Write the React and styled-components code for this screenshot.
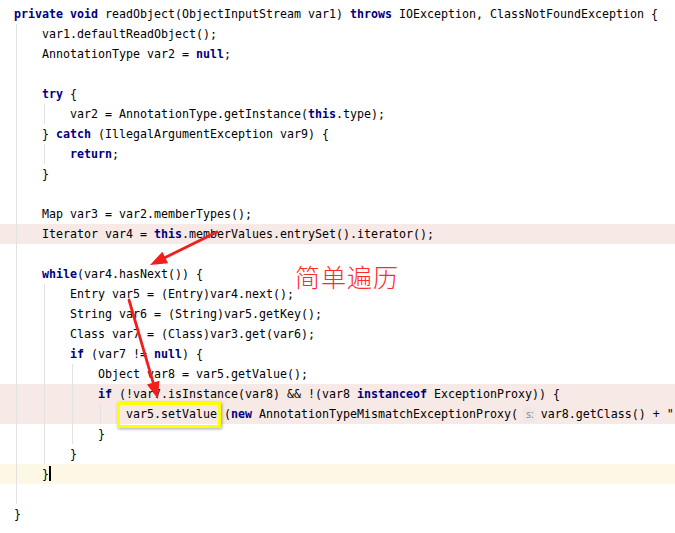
import React from "react";
import styled, { createGlobalStyle } from "styled-components";

const Global = createGlobalStyle`
  html, body { margin: 0; padding: 0; background: #ffffff; }
  #root { width: 675px; height: 533px; }
`;

const Editor = styled.div`
  position: relative;
  width: 675px;
  height: 533px;
  overflow: hidden;
  background: #ffffff;
  padding-top: 4px;
  box-sizing: border-box;
  font-family: "DejaVu Sans Mono", "Liberation Mono", monospace;
  font-size: 11.63px;
  color: #000000;
`;

const Line = styled.div`
  height: 20px;
  line-height: 20px;
  white-space: pre;
  padding-left: ${(p) => 14 + p.$indent * 28}px;
  background: ${(p) =>
    p.$hl === "error" ? "#f7e9e5" : p.$hl === "caret" ? "#fdf8e6" : "transparent"};
`;

const Kw = styled.span`
  color: #000080;
  font-weight: bold;
`;

const Hint = styled.span`
  display: inline-block;
  margin: 0 4px 0 5px;
  padding: 0 3px;
  height: 15px;
  line-height: 15px;
  border-radius: 3px;
  background: #efe8e6;
  color: #8a8a8a;
  font-family: "Noto Sans", "DejaVu Sans", sans-serif;
  font-size: 10.5px;
  vertical-align: 0px;
`;

const Boxed = styled.span`
  position: relative;
  display: inline-block;
  height: 20px;
  &::after {
    content: "";
    position: absolute;
    left: -9px;
    top: -2px;
    right: -4px;
    bottom: -4px;
    border: 3px solid #ffff00;
    box-shadow: 1px 1px 3px rgba(0, 0, 0, 0.35);
  }
`;

const Caret = styled.span`
  display: inline-block;
  width: 2px;
  height: 15px;
  background: #000000;
  vertical-align: -3px;
`;

const Guide = styled.div`
  position: absolute;
  width: 1px;
  background: #e2e2e2;
`;

const Overlay = styled.svg`
  position: absolute;
  left: 0;
  top: 0;
  pointer-events: none;
`;

const Note = styled.div`
  position: absolute;
  left: 295px;
  top: 261px;
  font-family: "Noto Sans CJK SC", sans-serif;
  font-weight: 300;
  font-size: 25px;
  letter-spacing: 1px;
  color: #ff2a2a;
  line-height: 30px;
`;

const guides = [
  { x: 16, top: 24, bottom: 504 },
  { x: 44, top: 104, bottom: 124 },
  { x: 44, top: 144, bottom: 164 },
  { x: 44, top: 284, bottom: 464 },
  { x: 72, top: 364, bottom: 444 },
  { x: 100, top: 404, bottom: 424 },
];

function Arrow({ x1, y1, x2, y2 }) {
  const dx = x2 - x1;
  const dy = y2 - y1;
  const len = Math.sqrt(dx * dx + dy * dy);
  const ux = dx / len;
  const uy = dy / len;
  const hl = 17;
  const hw = 6.5;
  const bx = x2 - ux * hl;
  const by = y2 - uy * hl;
  const px = -uy;
  const py = ux;
  const pts = `${x2},${y2} ${bx + px * hw},${by + py * hw} ${bx - px * hw},${by - py * hw}`;
  return (
    <g>
      <line x1={x1} y1={y1} x2={bx + ux * 3} y2={by + uy * 3} stroke="#f21d1d" strokeWidth="2.8" strokeLinecap="round" />
      <polygon points={pts} fill="#f21d1d" />
    </g>
  );
}

export default function App() {
  return (
    <>
      <Global />
      <Editor>
        {guides.map((g, i) => (
          <Guide key={i} style={{ left: g.x, top: g.top, height: g.bottom - g.top }} />
        ))}
        <Line $indent={0}>
          <Kw>private</Kw> <Kw>void</Kw> readObject(ObjectInputStream var1) <Kw>throws</Kw> IOException, ClassNotFoundException {"{"}
        </Line>
        <Line $indent={1}>var1.defaultReadObject();</Line>
        <Line $indent={1}>
          AnnotationType var2 = <Kw>null</Kw>;
        </Line>
        <Line $indent={1} />
        <Line $indent={1}>
          <Kw>try</Kw> {"{"}
        </Line>
        <Line $indent={2}>
          var2 = AnnotationType.getInstance(<Kw>this</Kw>.type);
        </Line>
        <Line $indent={1}>
          {"} "}
          <Kw>catch</Kw> (IllegalArgumentException var9) {"{"}
        </Line>
        <Line $indent={2}>
          <Kw>return</Kw>;
        </Line>
        <Line $indent={1}>{"}"}</Line>
        <Line $indent={1} />
        <Line $indent={1}>Map var3 = var2.memberTypes();</Line>
        <Line $indent={1} $hl="error">
          Iterator var4 = <Kw>this</Kw>.memberValues.entrySet().iterator();
        </Line>
        <Line $indent={1} />
        <Line $indent={1}>
          <Kw>while</Kw>(var4.hasNext()) {"{"}
        </Line>
        <Line $indent={2}>Entry var5 = (Entry)var4.next();</Line>
        <Line $indent={2}>String var6 = (String)var5.getKey();</Line>
        <Line $indent={2}>Class var7 = (Class)var3.get(var6);</Line>
        <Line $indent={2}>
          <Kw>if</Kw> (var7 != <Kw>null</Kw>) {"{"}
        </Line>
        <Line $indent={3}>Object var8 = var5.getValue();</Line>
        <Line $indent={3} $hl="error">
          <Kw>if</Kw> (!var7.isInstance(var8) &amp;&amp; !(var8 <Kw>instanceof</Kw> ExceptionProxy)) {"{"}
        </Line>
        <Line $indent={4} $hl="error">
          <Boxed>var5.setValue</Boxed> (<Kw>new</Kw> AnnotationTypeMismatchExceptionProxy(
          <Hint>s:</Hint>
          var8.getClass() + "
        </Line>
        <Line $indent={3}>{"}"}</Line>
        <Line $indent={2}>{"}"}</Line>
        <Line $indent={1} $hl="caret">
          {"}"}
          <Caret />
        </Line>
        <Line $indent={0} />
        <Line $indent={0}>{"}"}</Line>

        <Note>简单遍历</Note>
        <Overlay width="675" height="533" viewBox="0 0 675 533">
          <Arrow x1={217} y1={232} x2={150} y2={265} />
          <Arrow x1={129} y1={300} x2={158} y2={399} />
        </Overlay>
      </Editor>
    </>
  );
}
